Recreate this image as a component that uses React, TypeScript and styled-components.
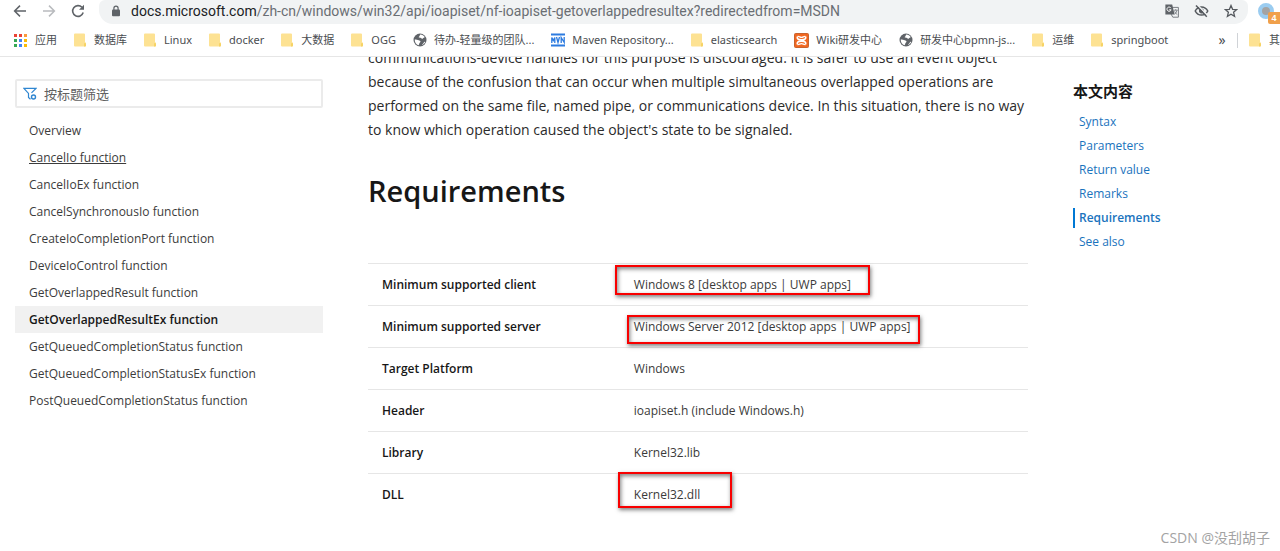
import React from 'react';
import styled, { createGlobalStyle, css } from 'styled-components';

const GlobalStyle = createGlobalStyle`
  * { box-sizing: border-box; }
  body {
    margin: 0;
    background: #fff;
    color: #171717;
    font-family: "Open Sans", "Noto Sans CJK SC", sans-serif;
    font-size: 12px;
  }
`;

const Page = styled.div`
  position: relative;
  display: flex;
  flex-direction: column;
  min-height: 100vh;
  overflow: hidden;
`;

const Chrome = styled.header`
  background: #fff;
  border-bottom: 1px solid #e6e6e6;
  font-family: "Noto Sans", "Noto Sans CJK SC", sans-serif;
`;

const Toolbar = styled.div`
  display: flex;
  align-items: center;
  height: 24px;
  padding: 0 0 3px 13px;
`;

const NavButtons = styled.div`
  display: flex;
  gap: 15px;
  width: 86px;
`;

const IconButton = styled.button`
  display: flex;
  padding: 0;
  border: 0;
  background: none;
  color: #5f6368;
`;

const AddressBar = styled.div`
  display: flex;
  flex: 1;
  align-items: center;
  align-self: flex-start;
  height: 24px;
  padding: 0 10px 3px 12px;
  border-radius: 6px 6px 14px 14px;
  background: #f1f3f4;
`;

const Url = styled.div`
  flex: 1;
  margin-left: 10px;
  overflow: hidden;
  color: #6a6e73;
  font-family: Roboto, "Open Sans", sans-serif;
  font-size: 14px;
  line-height: 20px;
  white-space: nowrap;
`;

const Host = styled.span`
  color: #202124;
`;

const AddressActions = styled.div`
  display: flex;
  align-items: center;
  gap: 15px;
`;

const Profile = styled.button`
  position: relative;
  width: 22px;
  height: 21px;
  margin-left: 10px;
  padding: 0;
  border: 0;
  background: none;
`;

const Avatar = styled.span`
  display: block;
  width: 16px;
  height: 16px;
  border: 4px solid #9accf0;
  border-radius: 50%;
  background: #a3a3a3;
`;

const Badge = styled.span`
  position: absolute;
  right: 0;
  bottom: -3px;
  width: 12px;
  height: 12px;
  border-radius: 2px 0 0 2px;
  background: #f0a04b;
  color: #fff;
  font-size: 9px;
  font-weight: 700;
  line-height: 12px;
`;

const BookmarkBar = styled.nav`
  display: flex;
  align-items: center;
  gap: 17px;
  height: 32px;
  padding-left: 14px;
  overflow: hidden;
`;

const Bookmark = styled.a`
  display: flex;
  flex: none;
  align-items: center;
  gap: 7px;
  color: #4a4d51;
  font-size: 11px;
  line-height: 16px;
  text-decoration: none;
  white-space: nowrap;
`;

const OtherBookmarks = styled.div`
  display: flex;
  flex: none;
  align-items: center;
  gap: 11px;
  width: 62px;
  margin-left: auto;
`;

const MoreButton = styled.button`
  flex: none;
  width: 8px;
  padding: 0;
  border: 0;
  background: none;
  color: #4a4d51;
  font: inherit;
  font-size: 14px;
  line-height: 16px;
`;

const Divider = styled.span`
  flex: none;
  width: 1px;
  height: 15px;
  background: #d0d3d7;
`;

const Content = styled.div`
  display: grid;
  flex: 1;
  grid-template-columns: 308px minmax(0, 1fr) 207px;
  column-gap: 45px;
  padding-left: 15px;
  overflow: hidden;
`;

const Sidebar = styled.aside`
  padding-top: 22px;
`;

const Filter = styled.label`
  display: flex;
  align-items: center;
  gap: 7px;
  height: 29px;
  padding: 0 6px;
  border: 2px solid #ebebeb;
  border-radius: 2px;
`;

const FilterInput = styled.input`
  flex: 1;
  min-width: 0;
  padding: 0;
  border: 0;
  outline: 0;
  background: none;
  font: inherit;
  font-size: 13px;
  &::placeholder { color: #606060; opacity: 1; }
`;

const Tree = styled.nav`
  display: flex;
  flex-direction: column;
  padding-top: 9px;
`;

const TreeLink = styled.a<{ $selected?: boolean; $hovered?: boolean }>`
  padding-left: 14px;
  color: #3c3c3c;
  font-size: 12px;
  line-height: 27px;
  text-decoration: ${p => (p.$hovered ? 'underline' : 'none')};
  ${p => p.$selected && css`
    background: #f1f1f1;
    color: #171717;
    font-weight: 600;
  `}
`;

const Article = styled.main`
  margin-top: -11px;
`;

const Paragraph = styled.p`
  margin: 0;
  color: #2b2b2b;
  font-size: 14px;
  line-height: 24px;
`;

const Line = styled.span`
  display: block;
  white-space: nowrap;
`;

const Heading = styled.h2`
  margin: 27px 0 50px;
  font-size: 29px;
  font-weight: 600;
  line-height: 44px;
`;

const Table = styled.table`
  width: 100%;
  border-collapse: collapse;
  table-layout: fixed;
  font-size: 12px;
`;

const Row = styled.tr`
  height: 42px;
  border-top: 1px solid #e6e6e6;
`;

const Term = styled.th`
  width: 38%;
  padding: 0 14px;
  font-weight: 600;
  text-align: left;
`;

const Value = styled.td`
  position: relative;
  padding: 0 15px;
  color: #3a3a3a;
`;

const Mark = styled.span<{ $left: number; $top: number; $width: number; $height: number }>`
  position: absolute;
  left: ${p => p.$left}px;
  top: ${p => p.$top}px;
  width: ${p => p.$width}px;
  height: ${p => p.$height}px;
  border: 2px solid #f80000;
  box-shadow: 1px 2px 4px rgba(0, 0, 0, 0.5), inset 1px 2px 4px rgba(0, 0, 0, 0.5);
`;

const Toc = styled.aside`
  padding-top: 23px;
`;

const TocTitle = styled.h3`
  margin: 0 0 10px;
  font-size: 15px;
  font-weight: 700;
  line-height: 22px;
`;

const TocList = styled.nav`
  display: flex;
  flex-direction: column;
  gap: 4px;
`;

const TocLink = styled.a<{ $current?: boolean }>`
  padding-left: 4px;
  border-left: 2px solid ${p => (p.$current ? '#0078d4' : 'transparent')};
  color: #1a73bd;
  font-size: 12px;
  font-weight: ${p => (p.$current ? 600 : 400)};
  line-height: 20px;
  text-decoration: none;
`;

const Watermark = styled.div`
  position: absolute;
  right: 10px;
  bottom: 3px;
  color: #a3a3a3;
  font-size: 14px;
  line-height: 20px;
`;

const BackIcon = ({ faded }: { faded?: boolean }) => (
  <svg width="14" height="14" viewBox="0 0 14 14" fill="none" stroke={faded ? '#b9bbbe' : '#5f6368'} strokeWidth="1.5"
    transform={faded ? 'scale(-1 1)' : undefined}>
    <path d="M13 7H2M7 1.6 1.6 7 7 12.4" />
  </svg>
);

const ReloadIcon = () => (
  <svg width="14" height="14" viewBox="0 0 14 14">
    <path d="M12.2 8.6A5.4 5.4 0 1 1 11 3.3" fill="none" stroke="#5f6368" strokeWidth="1.6" />
    <path d="M13 .8v5H8z" fill="#5f6368" />
  </svg>
);

const LockIcon = () => (
  <svg width="10" height="12" viewBox="0 0 10 12">
    <rect x="1" y="4.4" width="8" height="6.8" rx="1" fill="#5f6368" />
    <path d="M2.9 5V3.2a2.1 2.1 0 0 1 4.2 0V5" fill="none" stroke="#5f6368" strokeWidth="1.2" />
  </svg>
);

const TranslateIcon = () => (
  <svg width="14" height="14" viewBox="0 0 14 14" fill="none">
    <path d="M6 3.4h7.4v9.8H7.8L6 10" fill="#f1f3f4" stroke="#7b7f84" />
    <path d="M.4.6h6.8L9.600 10.600H.4z" fill="#5f6368" />
    <path d="M5.900 4.100A2.100 2.100 0 1 0 6.100 5.800H4.200" stroke="#fff" />
    <path d="M8.700 6.200h4M10.700 5.200v1M12 6.300c-.3 1.700-1.200 3-2.400 4M9.600 7.300c.5 1.400 1.400 2.500 2.700 3.300" stroke="#7b7f84" strokeWidth=".9" />
  </svg>
);

const EyeOffIcon = () => (
  <svg width="15" height="14" viewBox="0 0 15 14" fill="none" stroke="#55595e">
    <path d="M1.200 7C2.600 4.300 4.800 2.900 7.500 2.900S12.400 4.300 13.800 7c-1.400 2.700-3.600 4.100-6.300 4.100S2.600 9.700 1.200 7z" strokeWidth="1.500" />
    <circle cx="7.500" cy="7" r="2.100" fill="#55595e" />
    <path d="M3.200.7 14 11.700" stroke="#f1f3f4" strokeWidth="1.500" />
    <path d="M2 1.500 12.800 12.700" strokeWidth="1.500" />
  </svg>
);

const StarIcon = () => (
  <svg width="14" height="14" viewBox="0 0 14 14" fill="none" stroke="#55595e" strokeWidth="1.300">
    <path d="m7 1.500 1.600 3.800 4.100.3-3.100 2.700 1 4L7 10.200l-3.600 2.100 1-4-3.100-2.700 4.100-.3z" />
  </svg>
);

const AppsIcon = () => {
  const colors = ['#ea4335', '#ea4335', '#fb9a3c', '#34a853', '#4285f4', '#fbbc05', '#34a853', '#4285f4', '#fbbc05'];
  return (
    <svg width="14" height="14" viewBox="0 0 14 14">
      {colors.map((c, i) => (
        <rect key={i} x={(i % 3) * 5} y={1 + Math.floor(i / 3) * 5} width="3" height="3" fill={c} />
      ))}
    </svg>
  );
};

const FolderIcon = () => (
  <svg width="13" height="14" viewBox="0 0 13 14">
    <path d="M0 1.500Q0 .5 1 .5h9q1 0 1 1V9l1 1v2.500q0 1-1 1H1q-1 0-1-1z" fill="#fde293" />
    <path d="M12 10.500v2q0 1-1 1h-1v-2.500q0-1 1-1t1 .5z" fill="#f6d365" />
  </svg>
);

const GlobeIcon = () => (
  <svg width="14" height="14" viewBox="0 0 14 14">
    <circle cx="7" cy="7" r="6.500" fill="#5f6368" />
    <path d="M7.200 1.600c1.900 0 3.600 1 4.500 2.500-.4 1-1.400.5-1.800 1.300-.5.900-1.600.4-1.500-.5-1 .1-1.600-.6-2.600-.4-.2-1 .9-1 .8-1.700z" fill="#fff" />
    <path d="M1.700 6.400c1.400.1 3.200.2 4 .8.900.7 1.700.3 1.800 1.400.1.900-1.100 1-1.200 2-.1.700-.3 1.300-.8 1.600C3.300 11.500 1.600 9.400 1.700 6.400z" fill="#fff" />
    <path d="M9 11.900c.4-1.300 1.500-1.100 1.800-2.400.2-.7 1-.9 1.400-.6-.5 1.300-1.700 2.500-3.200 3z" fill="#fff" />
  </svg>
);

const MavenIcon = () => (
  <svg width="14" height="14" viewBox="0 0 14 14" fill="none" stroke="#2c7be0">
    <path d="M0 1.500h14M0 12.500h14" strokeWidth="2" />
    <path d="M.8 10V4.500l1.500 3 1.500-3V10M5.500 4l1.500 5.500L8.500 4M10.200 10V4.500l3 5V4" strokeWidth="1.300" />
  </svg>
);

const WikiIcon = () => (
  <svg width="15" height="15" viewBox="0 0 15 15" fill="none" stroke="#fff">
    <rect x=".5" y=".5" width="14" height="14" rx="1" fill="#f1661f" stroke="#c8632f" />
    <path d="M3.500 3.600c-.9 1.800.2 3.300 4 3.300s4.900-1.500 4-3.300M3.500 11.400c-.9-1.800.2-3.300 4-3.300s4.900 1.500 4 3.300" strokeWidth="1.600" />
    <path d="M3.500 3.600c1.300-.6 2.500.8 4 .8s2.700-1.400 4-.8M3.500 11.400c1.300.6 2.500-.8 4-.8s2.700 1.400 4 .8" strokeWidth="1.300" />
  </svg>
);

const FilterIcon = () => (
  <svg width="14" height="14" viewBox="0 0 14 14" fill="none" stroke="#2f86d1" strokeWidth="1.200">
    <path d="M8.500 5.900 13 1.400H.9l4.600 5v4.100l2 1.800" />
    <circle cx="10.500" cy="10" r="2" strokeWidth="1.400" />
  </svg>
);

const icons = {
  apps: AppsIcon,
  folder: FolderIcon,
  globe: GlobeIcon,
  maven: MavenIcon,
  wiki: WikiIcon,
};

const bookmarks: { icon: keyof typeof icons; label: string }[] = [
  { icon: 'apps', label: '应用' },
  { icon: 'folder', label: '数据库' },
  { icon: 'folder', label: 'Linux' },
  { icon: 'folder', label: 'docker' },
  { icon: 'folder', label: '大数据' },
  { icon: 'folder', label: 'OGG' },
  { icon: 'globe', label: '待办-轻量级的团队...' },
  { icon: 'maven', label: 'Maven Repository...' },
  { icon: 'folder', label: 'elasticsearch' },
  { icon: 'wiki', label: 'Wiki研发中心' },
  { icon: 'globe', label: '研发中心bpmn-js...' },
  { icon: 'folder', label: '运维' },
  { icon: 'folder', label: 'springboot' },
];

const topics = [
  'Overview',
  'CancelIo function',
  'CancelIoEx function',
  'CancelSynchronousIo function',
  'CreateIoCompletionPort function',
  'DeviceIoControl function',
  'GetOverlappedResult function',
  'GetOverlappedResultEx function',
  'GetQueuedCompletionStatus function',
  'GetQueuedCompletionStatusEx function',
  'PostQueuedCompletionStatus function',
];

const paragraph = [
  'communications-device handles for this purpose is discouraged. It is safer to use an event object',
  'because of the confusion that can occur when multiple simultaneous overlapped operations are',
  'performed on the same file, named pipe, or communications device. In this situation, there is no way',
  "to know which operation caused the object's state to be signaled.",
];

type Box = [left: number, top: number, width: number, height: number];

const requirements: { term: string; value: string; mark?: Box }[] = [
  { term: 'Minimum supported client', value: 'Windows 8 [desktop apps | UWP apps]', mark: [-4, 1, 255, 30] },
  { term: 'Minimum supported server', value: 'Windows Server 2012 [desktop apps | UWP apps]', mark: [8, 9, 293, 29] },
  { term: 'Target Platform', value: 'Windows' },
  { term: 'Header', value: 'ioapiset.h (include Windows.h)' },
  { term: 'Library', value: 'Kernel32.lib' },
  { term: 'DLL', value: 'Kernel32.dll', mark: [-1, -2, 114, 36] },
];

const sections = ['Syntax', 'Parameters', 'Return value', 'Remarks', 'Requirements', 'See also'];

export default function App() {
  return (
    <Page>
      <GlobalStyle />
      <Chrome>
        <Toolbar>
          <NavButtons>
            <IconButton aria-label="Back"><BackIcon /></IconButton>
            <IconButton aria-label="Forward"><BackIcon faded /></IconButton>
            <IconButton aria-label="Reload"><ReloadIcon /></IconButton>
          </NavButtons>
          <AddressBar>
            <LockIcon />
            <Url role="textbox" aria-label="Address">
              <Host>docs.microsoft.com</Host>
              /zh-cn/windows/win32/api/ioapiset/nf-ioapiset-getoverlappedresultex?redirectedfrom=MSDN
            </Url>
            <AddressActions>
              <IconButton aria-label="Translate"><TranslateIcon /></IconButton>
              <IconButton aria-label="Tracking"><EyeOffIcon /></IconButton>
              <IconButton aria-label="Bookmark"><StarIcon /></IconButton>
            </AddressActions>
          </AddressBar>
          <Profile aria-label="Profile">
            <Avatar />
            <Badge>4</Badge>
          </Profile>
        </Toolbar>
        <BookmarkBar>
          {bookmarks.map(({ icon, label }) => {
            const Icon = icons[icon];
            return <Bookmark key={label} href="#"><Icon />{label}</Bookmark>;
          })}
          <OtherBookmarks>
            <MoreButton aria-label="More bookmarks">»</MoreButton>
            <Divider />
            <Bookmark href="#"><FolderIcon />其</Bookmark>
          </OtherBookmarks>
        </BookmarkBar>
      </Chrome>

      <Content>
        <Sidebar>
          <Filter>
            <FilterIcon />
            <FilterInput type="text" placeholder="按标题筛选" aria-label="按标题筛选" />
          </Filter>
          <Tree>
            {topics.map((t, i) => (
              <TreeLink key={t} href="#" $hovered={i === 1} $selected={i === 7}>{t}</TreeLink>
            ))}
          </Tree>
        </Sidebar>

        <Article>
          <Paragraph>
            {paragraph.map(l => <Line key={l}>{l} </Line>)}
          </Paragraph>
          <Heading>Requirements</Heading>
          <Table>
            <tbody>
              {requirements.map(({ term, value, mark }) => (
                <Row key={term}>
                  <Term scope="row">{term}</Term>
                  <Value>
                    {value}
                    {mark && <Mark $left={mark[0]} $top={mark[1]} $width={mark[2]} $height={mark[3]} />}
                  </Value>
                </Row>
              ))}
            </tbody>
          </Table>
        </Article>

        <Toc>
          <TocTitle>本文内容</TocTitle>
          <TocList>
            {sections.map(s => (
              <TocLink key={s} href="#" $current={s === 'Requirements'}>{s}</TocLink>
            ))}
          </TocList>
        </Toc>
      </Content>
      <Watermark>CSDN @没刮胡子</Watermark>
    </Page>
  );
}
